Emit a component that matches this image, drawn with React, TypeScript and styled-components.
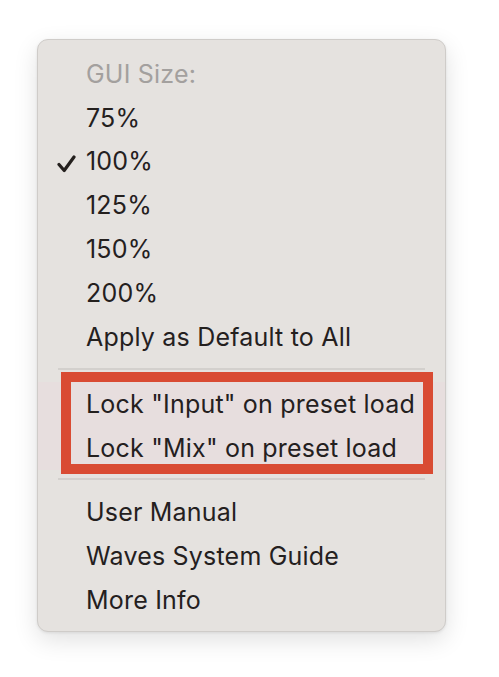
import styled, { createGlobalStyle } from 'styled-components';

const GlobalStyle = createGlobalStyle`
  html, body {
    margin: 0;
    padding: 0;
    background: #ffffff;
  }
  body {
    font-family: 'Inter', 'Liberation Sans', sans-serif;
    -webkit-font-smoothing: antialiased;
  }
`;

const Page = styled.div`
  width: 499px;
  height: 677px;
  padding: 39px 0 0 37px;
  box-sizing: border-box;
`;

const Menu = styled.div`
  width: 409px;
  height: 593px;
  box-sizing: border-box;
  padding: 12px 0 9px;
  background: #e5e2df;
  border: 1px solid #cfccc9;
  border-radius: 11px;
  box-shadow: 0 8px 24px rgba(0, 0, 0, 0.12), 0 1px 3px rgba(0, 0, 0, 0.08);
  display: flex;
  flex-direction: column;
`;

const Item = styled.div<{ $muted?: boolean }>`
  position: relative;
  height: 44px;
  display: flex;
  align-items: center;
  padding-left: 48px;
  font-size: 25px;
  letter-spacing: 0.2px;
  color: ${(p) => (p.$muted ? '#a3a09e' : '#24201e')};
  white-space: nowrap;
`;

const Check = styled.svg`
  position: absolute;
  left: 19px;
  top: 15px;
  width: 19px;
  height: 18px;
`;

const Separator = styled.div<{ $above: number; $below: number }>`
  margin: ${(p) => p.$above}px 20px ${(p) => p.$below}px;
  height: 2px;
  background: #d3d0cd;
`;

const Highlight = styled.div`
  position: relative;
  background: rgba(235, 215, 222, 0.35);

  &::after {
    content: '';
    position: absolute;
    left: 23px;
    right: 12px;
    top: -10px;
    bottom: -4px;
    border: 10px solid #d94b33;
    pointer-events: none;
  }
`;

const sizes = ['75%', '100%', '125%', '150%', '200%'];

export default function App() {
  return (
    <Page>
      <GlobalStyle />
      <Menu>
        <Item $muted>GUI Size:</Item>
        {sizes.map((s) => (
          <Item key={s}>
            {s === '100%' && (
              <Check viewBox="0 0 19 18">
                <path
                  d="M2 9.5 L7.2 15.5 L17 2"
                  fill="none"
                  stroke="#24201e"
                  strokeWidth="3.2"
                  strokeLinecap="round"
                  strokeLinejoin="round"
                />
              </Check>
            )}
            {s}
          </Item>
        ))}
        <Item>Apply as Default to All</Item>
        <Separator $above={9} $below={12} />
        <Highlight>
          <Item>Lock "Input" on preset load</Item>
          <Item>Lock "Mix" on preset load</Item>
        </Highlight>
        <Separator $above={8} $below={11} />
        <Item>User Manual</Item>
        <Item>Waves System Guide</Item>
        <Item>More Info</Item>
      </Menu>
    </Page>
  );
}
